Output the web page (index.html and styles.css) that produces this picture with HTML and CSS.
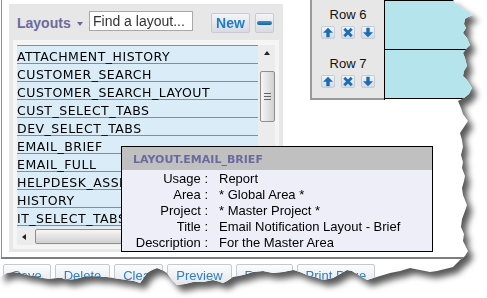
FILE: index.html
```html
<!DOCTYPE html>
<html lang="en">
<head>
    <meta charset="UTF-8">
    <title>Layouts</title>
    <link rel="stylesheet" href="styles.css">
</head>
<body>
    <div class="sheet">
        <div class="page">
            <div class="main">
                <div class="designer">
                    <div class="panel">
                        <div class="panel-head">
                            <span class="panel-title">Layouts <span class="caret"></span></span>
                            <input class="search" type="text" placeholder="Find a layout...">
                            <button class="btn-new">New</button>
                            <button class="btn-remove"><span class="dash"></span></button>
                        </div>
                        <div class="list-box">
                            <div class="list-view">
                                <ul class="layout-list">
                                    <li>ATTACHMENT_HISTORY</li>
                                    <li>CUSTOMER_SEARCH</li>
                                    <li>CUSTOMER_SEARCH_LAYOUT</li>
                                    <li>CUST_SELECT_TABS</li>
                                    <li>DEV_SELECT_TABS</li>
                                    <li>EMAIL_BRIEF</li>
                                    <li>EMAIL_FULL</li>
                                    <li>HELPDESK_ASSETS</li>
                                    <li>HISTORY</li>
                                    <li>IT_SELECT_TABS</li>
                                </ul>
                                <div class="vscroll">
                                    <span class="arrow-up"></span>
                                    <span class="vthumb"><span class="grip"></span></span>
                                </div>
                            </div>
                            <div class="hscroll">
                                <span class="arrow-left"></span>
                                <span class="hthumb"></span>
                            </div>
                        </div>
                    </div>
                </div>
                <div class="canvas">
                    <div class="row-table">
                        <div class="handles">
                            <div class="handle">
                                Row 6
                                <div class="row-tools">
                                    <span class="tool"><svg viewBox="0 0 12 11"><path d="M6 0.8 L11 5.8 H7.7 V10.2 H4.3 V5.8 H1 Z"/></svg></span>
                                    <span class="tool"><svg viewBox="0 0 12 11"><path d="M2.3 1.8 L9.7 9.2 M9.7 1.8 L2.3 9.2" class="x"/></svg></span>
                                    <span class="tool"><svg viewBox="0 0 12 11"><path d="M6 10.2 L11 5.2 H7.7 V0.8 H4.3 V5.2 H1 Z"/></svg></span>
                                </div>
                            </div>
                            <div class="handle">
                                Row 7
                                <div class="row-tools">
                                    <span class="tool"><svg viewBox="0 0 12 11"><path d="M6 0.8 L11 5.8 H7.7 V10.2 H4.3 V5.8 H1 Z"/></svg></span>
                                    <span class="tool"><svg viewBox="0 0 12 11"><path d="M2.3 1.8 L9.7 9.2 M9.7 1.8 L2.3 9.2" class="x"/></svg></span>
                                    <span class="tool"><svg viewBox="0 0 12 11"><path d="M6 10.2 L11 5.2 H7.7 V0.8 H4.3 V5.2 H1 Z"/></svg></span>
                                </div>
                            </div>
                        </div>
                        <div class="cells">
                            <div class="cell"></div>
                            <div class="cell"></div>
                        </div>
                    </div>
                </div>
            </div>
            <div class="toolbar">
                <button class="action">Save</button>
                <button class="action">Delete</button>
                <button class="action">Clear</button>
                <button class="action">Preview</button>
                <button class="action">Return</button>
                <button class="action">Print Page</button>
            </div>

            <div class="tooltip">
                <div class="tooltip-head">LAYOUT.EMAIL_BRIEF</div>
                <dl class="tooltip-body">
                    <dt>Usage :</dt><dd>Report</dd>
                    <dt>Area :</dt><dd>* Global Area *</dd>
                    <dt>Project :</dt><dd>* Master Project *</dd>
                    <dt>Title :</dt><dd>Email Notification Layout - Brief</dd>
                    <dt>Description :</dt><dd>For the Master Area</dd>
                </dl>
            </div>
        </div>
    </div>
</body>
</html>
```

FILE: styles.css
```css
body {
    margin: 0;
    background: #fff;
    font-family: "Liberation Sans", Arial, sans-serif;
}

.sheet {
    width: 487px;
    height: 298px;
    filter: drop-shadow(5px 6px 3px rgba(0, 0, 0, 0.65));
}

/* torn paper edge on the right and bottom */
.page {
    position: relative;
    width: 487px;
    height: 298px;
    background: #fff;
    display: flex;
    flex-direction: column;
    clip-path: polygon(0px 0px, 453px 0px, 456px 4px, 462px 8px, 467px 11px, 473px 15px, 468px 17px, 465px 19px, 464px 24px, 466px 28px, 463px 33px, 467px 38px, 470px 45px, 466px 49px, 463px 53px, 465px 58px, 467px 66px, 464px 71px, 463px 76px, 467px 80px, 472px 88px, 469px 94px, 464px 98px, 458px 101px, 461px 108px, 463px 114px, 468px 121px, 464px 127px, 460px 133px, 462px 140px, 463px 147px, 461px 155px, 463px 162px, 462px 168px, 465px 176px, 464px 181px, 462px 188px, 463px 195px, 467px 205px, 465px 211px, 462px 219px, 461px 227px, 464px 234px, 463px 241px, 468px 251px, 465px 256px, 460px 260px, 456px 264px, 453px 267px, 445px 269px, 437px 271px, 430px 272px, 420px 270px, 410px 268px, 400px 271px, 390px 273px, 380px 276px, 367px 280px, 360px 276px, 352px 271px, 347px 270px, 340px 274px, 333px 278px, 323px 280px, 315px 277px, 307px 275px, 300px 272px, 293px 270px, 283px 272px, 273px 273px, 263px 271px, 253px 272px, 243px 275px, 233px 277px, 227px 281px, 223px 283px, 217px 281px, 213px 280px, 203px 282px, 193px 282px, 185px 284px, 177px 285px, 172px 280px, 167px 273px, 162px 270px, 157px 268px, 152px 270px, 147px 273px, 143px 279px, 140px 283px, 134px 281px, 127px 280px, 120px 279px, 113px 278px, 107px 277px, 100px 277px, 92px 276px, 83px 277px, 75px 279px, 67px 280px, 62px 278px, 57px 278px, 50px 279px, 43px 278px, 35px 276px, 27px 275px, 20px 273px, 13px 272px, 7px 273px, 3px 275px, 0px 277px);
}

.main {
    display: flex;
    height: 257px;
    margin-left: 1px;
    border-left: 1px solid #8c8c8c;
    border-bottom: 2px solid #7d7d7d;
}

.designer {
    padding: 4px 0 0 7px;
}

.panel {
    width: 274px;
    height: 248px;
    background: #e7e7e7;
}

.panel-head {
    display: flex;
    align-items: center;
    height: 35px;
    padding: 0 0 1px 8px;
}

.panel-title {
    display: flex;
    align-items: center;
    width: 72px;
    margin-top: 3px;
    font-size: 14px;
    font-weight: bold;
    color: #6b6a9d;
}

.caret {
    margin: 2px 0 0 6px;
    width: 0;
    height: 0;
    border-left: 3px solid transparent;
    border-right: 3px solid transparent;
    border-top: 4px solid #6b6a9d;
}

.search {
    box-sizing: border-box;
    width: 104px;
    height: 20px;
    margin: 0 0 1px 0;
    padding: 0 3px;
    border: 1px solid #a8a8a8;
    font: 14px "Liberation Sans", Arial, sans-serif;
    color: #333;
    background: #fff;
}

.search::placeholder {
    color: #333;
    opacity: 1;
}

.btn-new,
.btn-remove {
    box-sizing: border-box;
    height: 20px;
    margin-top: 3px;
    padding: 0;
    border: 1px solid #c9c9d2;
    border-radius: 2px;
    background: linear-gradient(#f3f4f7, #d9dbe3);
}

.btn-new {
    width: 39px;
    margin-left: 18px;
    font: bold 14px "Liberation Sans", Arial, sans-serif;
    color: #1f7dc8;
}

.btn-remove {
    width: 19px;
    margin-left: 5px;
    display: flex;
    align-items: center;
    justify-content: center;
}

.dash {
    width: 15px;
    height: 4px;
    border-radius: 2px;
    background: linear-gradient(#3c92d4, #1762a8);
}

.list-box {
    margin: 0 4px;
    padding: 5px 4px 4px;
    background: #f5f5f5;
}

.list-view {
    display: flex;
    height: 183px;
}

.layout-list {
    flex: 1;
    margin: 0;
    padding: 0;
    list-style: none;
    overflow: hidden;
    border-top: 1px solid #8c8c8c;
    background: #d9ecf8;
}

.layout-list li {
    height: 17px;
    border-bottom: 1px solid #8c8c8c;
    font: 12.5px/21px "DejaVu Sans", Verdana, sans-serif;
    letter-spacing: 0.5px;
    color: #000;
    white-space: nowrap;
}

.vscroll {
    width: 17px;
    display: flex;
    flex-direction: column;
    align-items: center;
    background: #ececec;
}

.arrow-up {
    margin-top: 6px;
    width: 0;
    height: 0;
    border-left: 3.5px solid transparent;
    border-right: 3.5px solid transparent;
    border-bottom: 4px solid #222;
}

.vthumb {
    margin: 16px 0 0 1px;
    width: 13px;
    height: 49px;
    display: flex;
    align-items: center;
    justify-content: center;
    border: 1px solid #8e8e8e;
    border-radius: 2px;
    background: linear-gradient(to right, #f6f6f6, #d0d0d0);
}

.grip {
    width: 7px;
    height: 8px;
    background: repeating-linear-gradient(#666 0 1px, transparent 1px 3px);
}

.hscroll {
    height: 17px;
    display: flex;
    align-items: center;
    background: #ececec;
}

.arrow-left {
    margin-left: 5px;
    width: 0;
    height: 0;
    border-top: 3.5px solid transparent;
    border-bottom: 3.5px solid transparent;
    border-right: 4px solid #222;
}

.hthumb {
    flex: 1;
    height: 13px;
    margin: 0 20px 0 9px;
    border: 1px solid #8e8e8e;
    border-radius: 2px;
    background: linear-gradient(#f6f6f6, #d0d0d0);
}

.canvas {
    margin-left: 27px;
}

.row-table {
    display: flex;
    width: 200px;
}

.handles {
    width: 72px;
    height: 98px;
    border-left: 2px solid #9a9a9a;
    border-bottom: 2px solid #9a9a9a;
    background: #e7e7e7;
}

.handle {
    box-sizing: border-box;
    height: 49px;
    padding-top: 7px;
    display: flex;
    flex-direction: column;
    align-items: center;
    font-size: 13px;
    line-height: 15px;
    color: #111;
}

.row-tools {
    display: flex;
    gap: 6px;
    margin-top: 4px;
}

.tool {
    box-sizing: border-box;
    width: 14px;
    height: 13px;
    display: flex;
    align-items: center;
    justify-content: center;
    border: 1px solid #c6cdd8;
    border-radius: 2px;
    background: linear-gradient(#f2f4f8, #d3dae5);
}

.tool svg {
    width: 12px;
    height: 11px;
    fill: #1a6cb4;
}

.tool .x {
    fill: none;
    stroke: #1a6cb4;
    stroke-width: 2.8;
}

.cells {
    flex: 1;
    border-left: 1px solid #000;
    border-top: 1px solid #000;
}

.cell {
    height: 48px;
    background: #b6e4ed;
    border-bottom: 1px solid #000;
}

.toolbar {
    display: flex;
    gap: 4px;
    padding: 5px 3px 0;
}

.action {
    height: 22px;
    padding: 0 8px;
    border: 1px solid #c4c9d2;
    border-radius: 2px;
    background: linear-gradient(#fbfcfd, #e2e6ec);
    font: 13px "Liberation Sans", Arial, sans-serif;
    color: #2f7fc8;
}

.tooltip {
    position: absolute;
    left: 121px;
    top: 146px;
    width: 310px;
    border: 1px solid #000;
    background: #eeeef8;
}

.tooltip-head {
    height: 23px;
    padding-left: 11px;
    background: #c0c0c0;
    font: bold 11px/25px "DejaVu Sans", Verdana, sans-serif;
    color: #6b6a9d;
}

.tooltip-body {
    display: grid;
    grid-template-columns: 74px auto;
    column-gap: 11px;
    margin: 0;
    padding: 1px 0 0 12px;
    font-size: 13px;
    line-height: 16px;
    color: #000;
}

.tooltip-body dt {
    text-align: right;
    white-space: nowrap;
}

.tooltip-body dd {
    margin: 0;
    white-space: nowrap;
}
```
